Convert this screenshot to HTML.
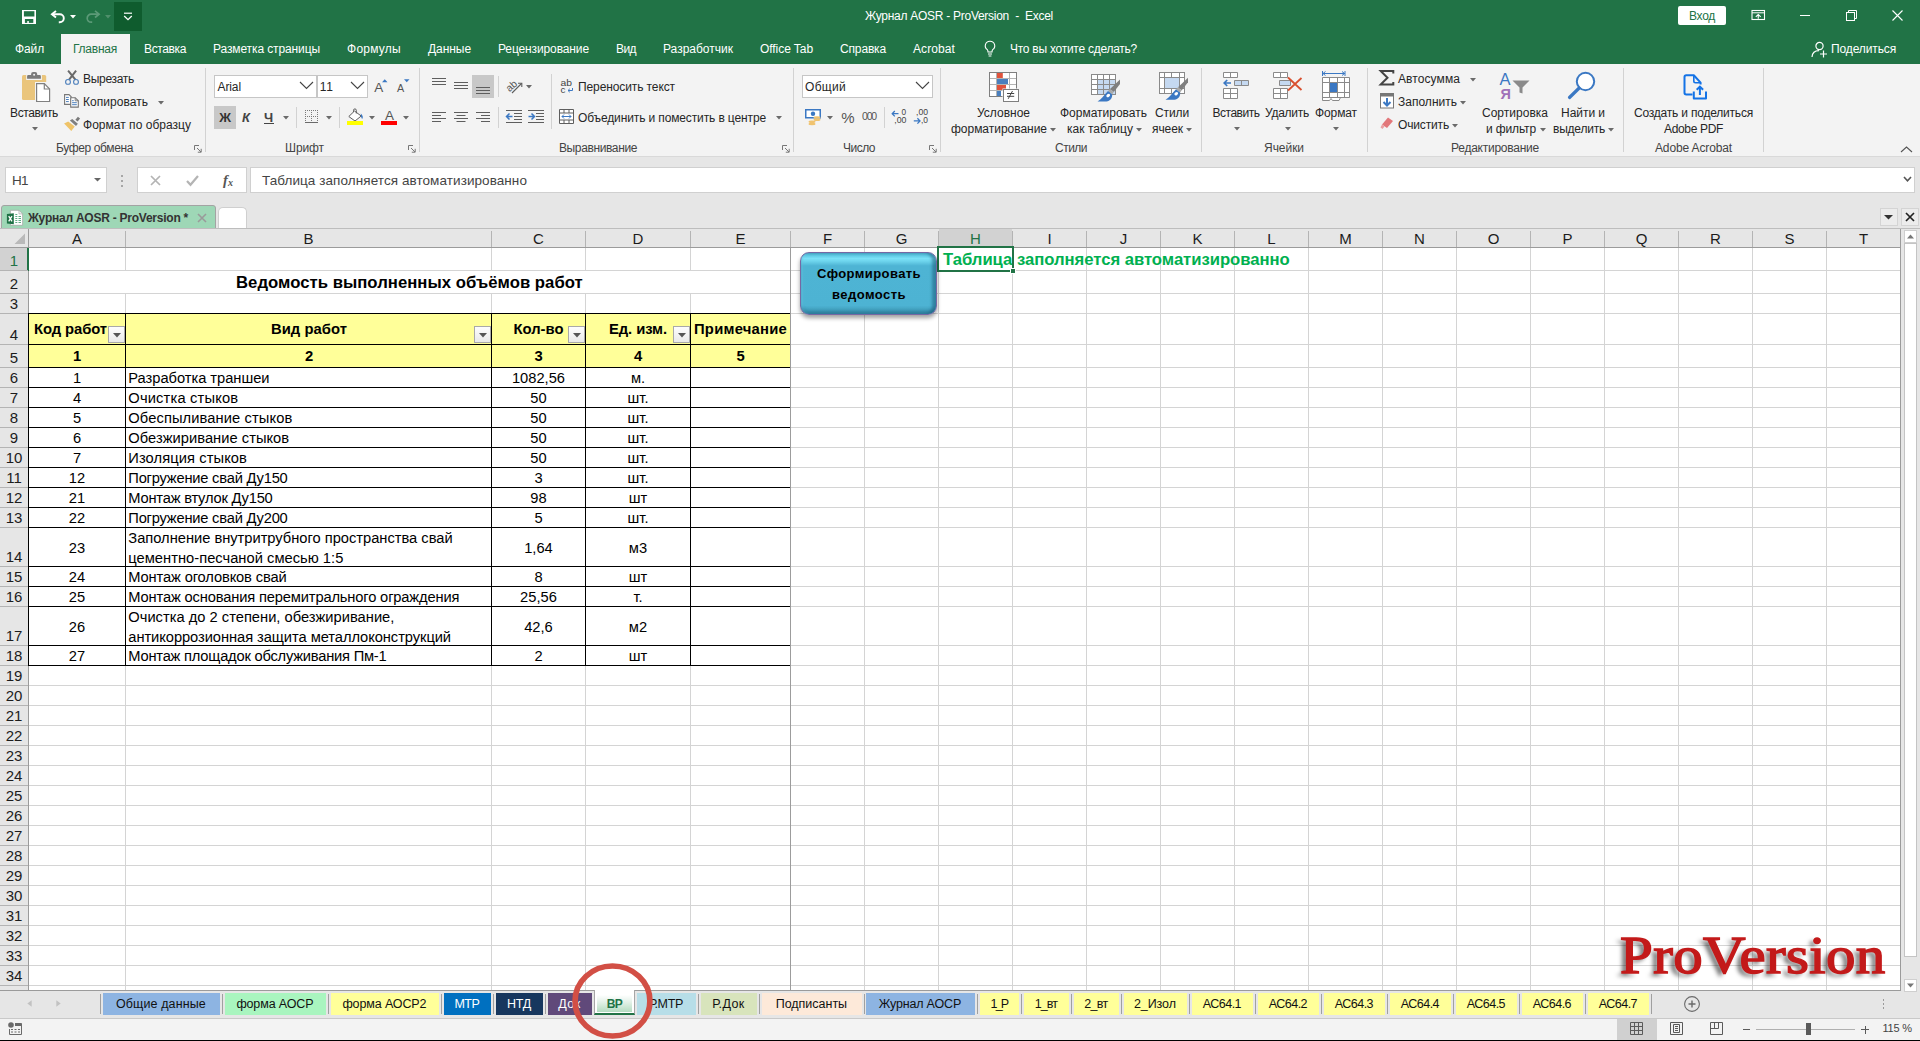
<!DOCTYPE html>
<html lang="ru"><head><meta charset="utf-8"><title>Журнал AOSR - ProVersion - Excel</title>
<style>
html,body{margin:0;padding:0;}
body{width:1920px;height:1041px;overflow:hidden;position:relative;background:#e6e6e6;font-family:"Liberation Sans",sans-serif;font-size:12px;color:#262626;}
div,svg,.t{position:absolute;}
.t{white-space:pre;display:block;}
svg{overflow:visible;}
</style></head><body>
<div style="left:0px;top:0px;width:1920px;height:64px;background:#217346;"></div>
<svg style="left:22px;top:10px;" width="14" height="14" viewBox="0 0 14 14"><rect x="0" y="0" width="14" height="14" fill="#fff"/><rect x="1.900" y="1.200" width="10.500" height="5.300" fill="#217346"/><rect x="2.900" y="9" width="8.400" height="3.900" fill="#217346"/><rect x="5.200" y="11.100" width="1.700" height="1.800" fill="#fff"/></svg>
<svg style="left:50px;top:10px;" width="16" height="14" viewBox="0 0 16 14"><path d="M2 4.200H9.800A4 4 0 0 1 9.800 12.200H8.800" fill="none" stroke="#fff" stroke-width="1.900"/><path d="M6 0.900L1.900 4.200L6 7.500" fill="none" stroke="#fff" stroke-width="1.900"/></svg>
<svg style="left:69.5px;top:15.0px;" width="6" height="4" viewBox="0 0 6 4"><path d="M0 0H6L3.0 3.5Z" fill="#fff"/></svg>
<svg style="left:86px;top:10px;" width="16" height="14" viewBox="0 0 16 14"><path d="M13 4.200H5.200A4 4 0 0 0 5.200 12.200H6.200" fill="none" stroke="#5c9a78" stroke-width="1.700"/><path d="M9 0.900L13.100 4.200L9 7.500" fill="none" stroke="#5c9a78" stroke-width="1.700"/></svg>
<svg style="left:104.5px;top:15.0px;" width="6" height="4" viewBox="0 0 6 4"><path d="M0 0H6L3.0 3.5Z" fill="#4f8f6b"/></svg>
<div style="left:114px;top:2px;width:28px;height:29px;background:#0f5c2e;"></div>
<svg style="left:123px;top:12px;" width="10" height="9" viewBox="0 0 10 9"><path d="M1 1.2H9" stroke="#fff" stroke-width="1.2"/><path d="M1.2 4L5 7.6L8.8 4" fill="none" stroke="#fff" stroke-width="1.3"/></svg>
<span class="t" style="left:865.00px;top:7.94px;height:17px;line-height:17px;font-size:12px;color:#fff;letter-spacing:-0.270px;white-space:pre;">Журнал AOSR - ProVersion  -  Excel</span>
<div style="left:1678px;top:6px;width:48px;height:19px;background:#fff;border-radius:2px;"></div>
<span class="t" style="left:1689.00px;top:8.34px;height:17px;line-height:17px;font-size:12px;color:#217346;letter-spacing:-0.287px;">Вход</span>
<svg style="left:1751px;top:9px;" width="15" height="12" viewBox="0 0 15 12"><rect x="1" y="1.500" width="12.500" height="9" fill="none" stroke="#fff" stroke-width="1.100"/><path d="M1 3.800H13.500" stroke="#fff" stroke-width="1"/><path d="M7.250 9.800V5.600M4.800 7.800L7.250 5.400L9.700 7.800" fill="none" stroke="#fff" stroke-width="1.100"/></svg>
<div style="left:1800px;top:15px;width:10px;height:1px;background:#fff;"></div>
<svg style="left:1846px;top:10px;" width="12" height="11" viewBox="0 0 12 11"><rect x="0.5" y="2.5" width="8" height="8" fill="none" stroke="#fff"/><path d="M2.5 2.5V0.5H10.5V8.5H8.5" fill="none" stroke="#fff"/></svg>
<svg style="left:1892px;top:10px;" width="11" height="11" viewBox="0 0 11 11"><path d="M0.5 0.5L10.500 10.500M10.500 0.5L0.5 10.500" stroke="#fff" stroke-width="1.100"/></svg>
<div style="left:61px;top:34px;width:69px;height:30px;background:#f3f3f3;"></div>
<span class="t" style="left:15.00px;top:41.34px;height:17px;line-height:17px;font-size:12px;color:#fff;letter-spacing:-0.125px;">Файл</span>
<span class="t" style="left:73.00px;top:41.34px;height:17px;line-height:17px;font-size:12px;color:#217346;letter-spacing:-0.239px;">Главная</span>
<span class="t" style="left:144.00px;top:41.34px;height:17px;line-height:17px;font-size:12px;color:#fff;letter-spacing:-0.372px;">Вставка</span>
<span class="t" style="left:213.00px;top:41.34px;height:17px;line-height:17px;font-size:12px;color:#fff;letter-spacing:-0.110px;">Разметка страницы</span>
<span class="t" style="left:347.00px;top:41.34px;height:17px;line-height:17px;font-size:12px;color:#fff;letter-spacing:0.254px;">Формулы</span>
<span class="t" style="left:428.00px;top:41.34px;height:17px;line-height:17px;font-size:12px;color:#fff;letter-spacing:-0.059px;">Данные</span>
<span class="t" style="left:498.00px;top:41.34px;height:17px;line-height:17px;font-size:12px;color:#fff;letter-spacing:-0.119px;">Рецензирование</span>
<span class="t" style="left:616.00px;top:41.34px;height:17px;line-height:17px;font-size:12px;color:#fff;letter-spacing:-0.570px;">Вид</span>
<span class="t" style="left:663.00px;top:41.34px;height:17px;line-height:17px;font-size:12px;color:#fff;">Разработчик</span>
<span class="t" style="left:760.00px;top:41.34px;height:17px;line-height:17px;font-size:12px;color:#fff;letter-spacing:-0.059px;">Office Tab</span>
<span class="t" style="left:840.00px;top:41.34px;height:17px;line-height:17px;font-size:12px;color:#fff;letter-spacing:-0.153px;">Справка</span>
<span class="t" style="left:913.00px;top:41.34px;height:17px;line-height:17px;font-size:12px;color:#fff;letter-spacing:0.092px;">Acrobat</span>
<span class="t" style="left:1010.00px;top:41.34px;height:17px;line-height:17px;font-size:12px;color:#fff;letter-spacing:-0.257px;">Что вы хотите сделать?</span>
<svg style="left:983px;top:40px;" width="14" height="18" viewBox="0 0 14 18"><path d="M7 1.2A4.6 4.6 0 0 0 4.3 9.6C4.9 10.3 5 11 5 12H9C9 11 9.1 10.3 9.7 9.6A4.6 4.6 0 0 0 7 1.2Z" fill="none" stroke="#fff" stroke-width="1.1"/><path d="M5 14H9M5.6 16H8.4" stroke="#fff" stroke-width="1.1"/></svg>
<svg style="left:1811px;top:41px;" width="17" height="17" viewBox="0 0 17 17"><circle cx="8.5" cy="5" r="3.6" fill="none" stroke="#fff" stroke-width="1.2"/><path d="M1 16C1.3 11.5 4.5 9.6 8 9.6" fill="none" stroke="#fff" stroke-width="1.2"/><path d="M12.5 9.5V16.5M9 13H16" stroke="#fff" stroke-width="1.2"/></svg>
<span class="t" style="left:1831.00px;top:41.34px;height:17px;line-height:17px;font-size:12px;color:#fff;letter-spacing:-0.126px;">Поделиться</span>
<div style="left:0px;top:64px;width:1920px;height:92px;background:#f3f3f3;"></div>
<div style="left:0px;top:156px;width:1920px;height:1px;background:#d9d9d9;"></div>
<div style="left:0px;top:157px;width:1920px;height:72px;background:#e6e6e6;"></div>
<div style="left:5px;top:167px;width:102px;height:26px;background:#fff;border:1px solid #d0d0d0;box-sizing:border-box;"></div>
<span class="t" style="left:12.00px;top:171.32px;height:19px;line-height:19px;font-size:13.5px;color:#444;letter-spacing:-0.629px;">H1</span>
<svg style="left:93.5px;top:178.0px;" width="7" height="4" viewBox="0 0 7 4"><path d="M0 0H7L3.5 3.5Z" fill="#666"/></svg>
<div style="left:121px;top:175px;width:2px;height:2px;background:#a6a6a6;"></div>
<div style="left:121px;top:180px;width:2px;height:2px;background:#a6a6a6;"></div>
<div style="left:121px;top:185px;width:2px;height:2px;background:#a6a6a6;"></div>
<div style="left:137px;top:167px;width:110px;height:26px;background:#fff;border:1px solid #d0d0d0;box-sizing:border-box;"></div>
<svg style="left:150px;top:175px;" width="11" height="11" viewBox="0 0 11 11"><path d="M1 1L10 10M10 1L1 10" stroke="#b4b4b4" stroke-width="1.700"/></svg>
<svg style="left:186px;top:175px;" width="13" height="11" viewBox="0 0 13 11"><path d="M1 6L4.500 9.800L12 1" fill="none" stroke="#b4b4b4" stroke-width="2.200"/></svg>
<span class="t" style="left:223.00px;top:170.48px;height:20px;line-height:20px;font-size:14.5px;color:#555;font-weight:bold;font-style:italic;font-family:'Liberation Serif',serif;">f</span>
<span class="t" style="left:228.00px;top:176.03px;height:14px;line-height:14px;font-size:10px;color:#555;font-weight:bold;font-style:italic;font-family:'Liberation Serif',serif;">x</span>
<div style="left:250px;top:167px;width:1665px;height:26px;background:#fff;border:1px solid #d0d0d0;box-sizing:border-box;"></div>
<span class="t" style="left:262.00px;top:171.32px;height:19px;line-height:19px;font-size:13.5px;color:#444;letter-spacing:0.073px;">Таблица заполняется автоматизированно</span>
<svg style="left:1903px;top:176px;" width="9" height="7" viewBox="0 0 9 7"><path d="M1 1L4.5 4.8L8 1" fill="none" stroke="#555" stroke-width="1.6"/></svg>
<div style="left:1px;top:205px;width:215px;height:24px;background:#9ed7b6;border:1px solid #a3a3a3;border-radius:3px 3px 0 0;box-sizing:border-box;"></div>
<svg style="left:6px;top:209px;" width="17" height="17" viewBox="0 0 17 17"><path d="M4.400 1.300H13L16.600 4.900V16.300H4.400Z" fill="#fff" stroke="#a8a8a8" stroke-width="0.8"/><path d="M13 1.300V4.900H16.600" fill="none" stroke="#a8a8a8" stroke-width="0.7"/><path d="M9.300 7.500H11.300M12.500 7.500H15M9.300 9.500H11.300M12.500 9.500H15M9.300 11.500H11.300M12.500 11.500H15M9.300 13.500H11.300M12.500 13.500H15M9.300 5.500H11.300" stroke="#4ea277" stroke-width="0.9"/><path d="M0.900 5L7.800 4.200V15.200L0.900 14.400Z" fill="#1e7145"/><path d="M2.700 7.200L6 12.300M6 7.200L2.700 12.300" stroke="#fff" stroke-width="1.300"/></svg>
<span class="t" style="left:28.00px;top:210.34px;height:17px;line-height:17px;font-size:12px;color:#333;font-weight:bold;letter-spacing:-0.241px;">Журнал AOSR - ProVersion *</span>
<svg style="left:197px;top:213px;" width="10" height="10" viewBox="0 0 10 10"><path d="M1 1L9 9M9 1L1 9" stroke="#9a9a9a" stroke-width="1.6"/></svg>
<div style="left:218px;top:207px;width:29px;height:22px;background:#fff;border:1px solid #cfcfcf;border-bottom:none;border-radius:5px 5px 0 0;box-sizing:border-box;"></div>
<div style="left:1880px;top:208px;width:18px;height:18px;background:#ececec;border:1px solid #d4d4d4;box-sizing:border-box;"></div>
<svg style="left:1884.0px;top:214.5px;" width="9" height="5" viewBox="0 0 9 5"><path d="M0 0H9L4.5 4.5Z" fill="#333"/></svg>
<div style="left:1901px;top:208px;width:18px;height:18px;background:#ececec;border:1px solid #d4d4d4;box-sizing:border-box;"></div>
<svg style="left:1905px;top:212px;" width="10" height="10" viewBox="0 0 10 10"><path d="M1 1L9 9M9 1L1 9" stroke="#222" stroke-width="1.7"/></svg>
<div style="left:0px;top:228px;width:1920px;height:1px;background:#bdbdbd;"></div>
<div style="left:0px;top:991px;width:1920px;height:27px;background:#e6e6e6;"></div>
<div style="left:0px;top:990px;width:1920px;height:1px;background:#9b9b9b;"></div>
<div style="left:0px;top:1018px;width:1920px;height:1px;background:#c9c9c9;"></div>
<svg style="left:26.5px;top:1000.3px;" width="5" height="7" viewBox="0 0 5 7"><path d="M4.700 0.200V6.800L0.300 3.500Z" fill="#c2c2c2"/></svg>
<svg style="left:55.6px;top:1000.3px;" width="5" height="7" viewBox="0 0 5 7"><path d="M0.300 0.200V6.800L4.700 3.500Z" fill="#c2c2c2"/></svg>
<div style="left:100px;top:994px;width:1px;height:20px;background:#a0a0a0;"></div>
<div style="left:103px;top:993px;width:117px;height:22px;background:#8db4e2;"></div>
<span class="t" style="left:115.90px;top:995.17px;height:18px;line-height:18px;font-size:12.5px;color:#111;letter-spacing:0.120px;">Общие данные</span>
<div style="left:222px;top:994px;width:1px;height:20px;background:#a0a0a0;"></div>
<div style="left:225px;top:993px;width:101px;height:22px;background:#a9f5bf;"></div>
<span class="t" style="left:236.40px;top:995.17px;height:18px;line-height:18px;font-size:12.5px;color:#111;letter-spacing:-0.136px;">форма АОСР</span>
<div style="left:328px;top:994px;width:1px;height:20px;background:#a0a0a0;"></div>
<div style="left:331px;top:993px;width:108px;height:22px;background:#ffff99;"></div>
<span class="t" style="left:342.40px;top:995.17px;height:18px;line-height:18px;font-size:12.5px;color:#111;letter-spacing:-0.119px;">форма АОСР2</span>
<div style="left:441px;top:994px;width:1px;height:20px;background:#a0a0a0;"></div>
<div style="left:444px;top:993px;width:47px;height:22px;background:#0070c0;"></div>
<span class="t" style="left:454.40px;top:995.17px;height:18px;line-height:18px;font-size:12.5px;color:#fff;letter-spacing:-0.462px;">МТР</span>
<div style="left:493px;top:994px;width:1px;height:20px;background:#a0a0a0;"></div>
<div style="left:496px;top:993px;width:47px;height:22px;background:#17375e;"></div>
<span class="t" style="left:506.90px;top:995.17px;height:18px;line-height:18px;font-size:12.5px;color:#fff;letter-spacing:-0.238px;">НТД</span>
<div style="left:545px;top:994px;width:1px;height:20px;background:#a0a0a0;"></div>
<div style="left:548px;top:993px;width:44px;height:22px;background:#60497a;"></div>
<span class="t" style="left:558.15px;top:995.17px;height:18px;line-height:18px;font-size:12.5px;color:#fff;letter-spacing:0.491px;">Док</span>
<div style="left:594px;top:990px;width:41px;height:25px;background:#fff;border-left:1px solid #a6a6a6;border-right:1px solid #a6a6a6;border-bottom:2px solid #217346;box-sizing:border-box;"></div>
<div style="left:597px;top:994px;width:35px;height:18px;background:linear-gradient(#fff 5%,#e3f1e8 45%,#b4dcc1);"></div>
<span class="t" style="left:606.75px;top:995.84px;height:17px;line-height:17px;font-size:12px;color:#217346;font-weight:bold;letter-spacing:-0.585px;">ВР</span>
<div style="left:637px;top:993px;width:59px;height:22px;background:#b7dee8;"></div>
<span class="t" style="left:648.90px;top:995.17px;height:18px;line-height:18px;font-size:12.5px;color:#111;letter-spacing:-0.367px;">Р.МТР</span>
<div style="left:698px;top:994px;width:1px;height:20px;background:#a0a0a0;"></div>
<div style="left:701px;top:993px;width:56px;height:22px;background:#d8e4bc;"></div>
<span class="t" style="left:712.15px;top:995.17px;height:18px;line-height:18px;font-size:12.5px;color:#111;letter-spacing:0.405px;">Р.Док</span>
<div style="left:759px;top:994px;width:1px;height:20px;background:#a0a0a0;"></div>
<div style="left:762px;top:993px;width:100px;height:22px;background:#fde9d9;"></div>
<span class="t" style="left:775.70px;top:995.17px;height:18px;line-height:18px;font-size:12.5px;color:#111;letter-spacing:-0.012px;">Подписанты</span>
<div style="left:864px;top:994px;width:1px;height:20px;background:#a0a0a0;"></div>
<div style="left:866px;top:993px;width:109px;height:22px;background:#8db4e2;"></div>
<span class="t" style="left:878.75px;top:995.17px;height:18px;line-height:18px;font-size:12.5px;color:#111;letter-spacing:-0.176px;">Журнал АОСР</span>
<div style="left:977px;top:994px;width:1px;height:20px;background:#a0a0a0;"></div>
<div style="left:980px;top:993px;width:39px;height:22px;background:#ffff99;"></div>
<span class="t" style="left:990.55px;top:995.17px;height:18px;line-height:18px;font-size:12.5px;color:#111;letter-spacing:-1.847px;">1_Р</span>
<div style="left:1021px;top:994px;width:1px;height:20px;background:#a0a0a0;"></div>
<div style="left:1024px;top:993px;width:45px;height:22px;background:#ffff99;"></div>
<span class="t" style="left:1034.65px;top:995.17px;height:18px;line-height:18px;font-size:12.5px;color:#111;letter-spacing:-0.874px;">1_вт</span>
<div style="left:1071px;top:994px;width:1px;height:20px;background:#a0a0a0;"></div>
<div style="left:1074px;top:993px;width:45px;height:22px;background:#ffff99;"></div>
<span class="t" style="left:1084.25px;top:995.17px;height:18px;line-height:18px;font-size:12.5px;color:#111;letter-spacing:-0.674px;">2_вт</span>
<div style="left:1121px;top:994px;width:1px;height:20px;background:#a0a0a0;"></div>
<div style="left:1124px;top:993px;width:63px;height:22px;background:#ffff99;"></div>
<span class="t" style="left:1133.90px;top:995.17px;height:18px;line-height:18px;font-size:12.5px;color:#111;letter-spacing:-0.075px;">2_Изол</span>
<div style="left:1189px;top:994px;width:1px;height:20px;background:#a0a0a0;"></div>
<div style="left:1192px;top:993px;width:61px;height:22px;background:#ffff99;"></div>
<span class="t" style="left:1202.75px;top:995.17px;height:18px;line-height:18px;font-size:12.5px;color:#111;letter-spacing:-0.520px;">АС64.1</span>
<div style="left:1255px;top:994px;width:1px;height:20px;background:#a0a0a0;"></div>
<div style="left:1258px;top:993px;width:61px;height:22px;background:#ffff99;"></div>
<span class="t" style="left:1268.75px;top:995.17px;height:18px;line-height:18px;font-size:12.5px;color:#111;letter-spacing:-0.520px;">АС64.2</span>
<div style="left:1321px;top:994px;width:1px;height:20px;background:#a0a0a0;"></div>
<div style="left:1324px;top:993px;width:61px;height:22px;background:#ffff99;"></div>
<span class="t" style="left:1334.75px;top:995.17px;height:18px;line-height:18px;font-size:12.5px;color:#111;letter-spacing:-0.520px;">АС64.3</span>
<div style="left:1387px;top:994px;width:1px;height:20px;background:#a0a0a0;"></div>
<div style="left:1390px;top:993px;width:61px;height:22px;background:#ffff99;"></div>
<span class="t" style="left:1400.75px;top:995.17px;height:18px;line-height:18px;font-size:12.5px;color:#111;letter-spacing:-0.520px;">АС64.4</span>
<div style="left:1453px;top:994px;width:1px;height:20px;background:#a0a0a0;"></div>
<div style="left:1456px;top:993px;width:61px;height:22px;background:#ffff99;"></div>
<span class="t" style="left:1466.75px;top:995.17px;height:18px;line-height:18px;font-size:12.5px;color:#111;letter-spacing:-0.520px;">АС64.5</span>
<div style="left:1519px;top:994px;width:1px;height:20px;background:#a0a0a0;"></div>
<div style="left:1522px;top:993px;width:61px;height:22px;background:#ffff99;"></div>
<span class="t" style="left:1532.75px;top:995.17px;height:18px;line-height:18px;font-size:12.5px;color:#111;letter-spacing:-0.520px;">АС64.6</span>
<div style="left:1585px;top:994px;width:1px;height:20px;background:#a0a0a0;"></div>
<div style="left:1588px;top:993px;width:61px;height:22px;background:#ffff99;"></div>
<span class="t" style="left:1598.75px;top:995.17px;height:18px;line-height:18px;font-size:12.5px;color:#111;letter-spacing:-0.520px;">АС64.7</span>
<div style="left:1651px;top:994px;width:1px;height:20px;background:#a0a0a0;"></div>
<svg style="left:1683.7px;top:995.7px;" width="16" height="16" viewBox="0 0 16 16"><circle cx="8" cy="8" r="7.4" fill="none" stroke="#6a6a6a" stroke-width="1.1"/><path d="M8 4.5V11.5M4.5 8H11.5" stroke="#6a6a6a" stroke-width="1.4"/></svg>
<div style="left:1883px;top:999px;width:1px;height:2px;background:#9a9a9a;"></div>
<div style="left:1883px;top:1003px;width:1px;height:2px;background:#9a9a9a;"></div>
<div style="left:1883px;top:1007px;width:1px;height:2px;background:#9a9a9a;"></div>
<div style="left:0px;top:1019px;width:1920px;height:21px;background:#f3f3f3;"></div>
<div style="left:0px;top:1040px;width:1920px;height:1px;background:#000;"></div>
<svg style="left:8px;top:1022px;" width="14" height="13" viewBox="0 0 14 13"><circle cx="3" cy="3" r="2.8" fill="#6a6a6a"/><path d="M7 1.500H13.5V12.5H1.500V7" fill="none" stroke="#6a6a6a" stroke-width="1"/><path d="M7 1.500H13.5V4H7Z" fill="#6a6a6a"/><path d="M3 7.5H5M6.500 7.5H8.5M10 7.5H12M3 10H5M6.500 10H8.5M10 10H12" stroke="#6a6a6a" stroke-width="1.2"/></svg>
<div style="left:1617px;top:1019px;width:40px;height:21px;background:#d0d0d0;"></div>
<svg style="left:1630px;top:1022px;" width="14" height="13" viewBox="0 0 14 13"><path d="M0.5 0.5H12.5V12.5H0.5ZM0.5 4.5H12.5M0.5 8.5H12.5M4.5 0.5V12.5M8.5 0.5V12.5" fill="none" stroke="#5a5a5a"/></svg>
<svg style="left:1670px;top:1022px;" width="14" height="13" viewBox="0 0 14 13"><path d="M0.5 0.5H12.5V12.5H0.5Z" fill="none" stroke="#5a5a5a"/><path d="M3.500 2.500H9.500V10.500H3.500ZM5 4.500H8M5 6.500H8M5 8.500H8" fill="none" stroke="#5a5a5a"/></svg>
<svg style="left:1710px;top:1022px;" width="14" height="13" viewBox="0 0 14 13"><path d="M0.5 0.5H12.5V12.5H0.5Z" fill="none" stroke="#5a5a5a"/><path d="M4.500 0.5V6.500M8.500 0.5V6.500M0.5 6.500H8.500" fill="none" stroke="#5a5a5a"/></svg>
<div style="left:1743px;top:1029px;width:7px;height:1px;background:#5a5a5a;"></div>
<div style="left:1756px;top:1029px;width:99px;height:1px;background:#b0b0b0;"></div>
<div style="left:1806px;top:1023px;width:5px;height:12px;background:#5a5a5a;"></div>
<div style="left:1861px;top:1029px;width:8px;height:1px;background:#5a5a5a;"></div>
<div style="left:1864.5px;top:1025.5px;width:1px;height:8px;background:#5a5a5a;"></div>
<span class="t" style="left:1882.50px;top:1021.29px;height:15px;line-height:15px;font-size:11px;color:#444;letter-spacing:-0.235px;">115 %</span>
<svg style="left:22px;top:72px;" width="29" height="31" viewBox="0 0 29 31"><rect x="0" y="3" width="24.200" height="25" rx="1.600" fill="#eac57c"/><rect x="4.200" y="2.500" width="15.700" height="5.500" fill="#f3f3f3"/><path d="M5.100 6.800V4.300Q5.100 3.100 6.300 3.100H9.100V2.100Q9.100 0.100 11.100 0.100H13.200Q15.200 0.100 15.200 2.100V3.100H17.700Q18.900 3.100 18.900 4.300V6.800Z" fill="#7a7a7a"/><circle cx="12.100" cy="2.800" r="1" fill="#f3f3f3"/><rect x="13" y="10" width="16.500" height="21" fill="#f3f3f3"/><path d="M14.600 11.600H22.300L27.600 17V29.500H14.600Z" fill="#fff" stroke="#808080" stroke-width="1.200"/><path d="M22.300 11.600V17H27.600" fill="none" stroke="#808080" stroke-width="1.200"/></svg>
<span class="t" style="left:10.00px;top:105.04px;height:17px;line-height:17px;font-size:12px;color:#262626;letter-spacing:-0.358px;">Вставить</span>
<svg style="left:31.5px;top:127.0px;" width="6" height="4" viewBox="0 0 6 4"><path d="M0 0H6L3.0 3.5Z" fill="#6a6a6a"/></svg>
<svg style="left:65px;top:69px;" width="15" height="16" viewBox="0 0 15 16"><path d="M3.100 1.700L10.400 10.600M11.100 1.700L4.100 10.600" stroke="#6a6a6a" stroke-width="2" fill="none"/><circle cx="3" cy="12.900" r="2.400" fill="none" stroke="#4a7ebb" stroke-width="1.100"/><circle cx="11" cy="12.900" r="2.400" fill="none" stroke="#4a7ebb" stroke-width="1.100"/></svg>
<span class="t" style="left:83.00px;top:70.84px;height:17px;line-height:17px;font-size:12px;color:#262626;letter-spacing:-0.297px;">Вырезать</span>
<svg style="left:64px;top:93px;" width="16" height="16" viewBox="0 0 16 16"><path d="M0.600 1.600H5L7.200 3.800V11.400H0.600Z" fill="#fff" stroke="#777" stroke-width="1.100"/><path d="M2 4.400H4.800M2 6.500H4.800M2 8.600H4.800" stroke="#4a7ebb" stroke-width="1"/><path d="M6.700 4.700H11.200L14.300 7.800V14.100H6.700Z" fill="#fff" stroke="#777" stroke-width="1.100"/><path d="M11.200 4.700V7.800H14.300" fill="none" stroke="#777" stroke-width="0.900"/><path d="M8.100 7.700H9.700M8.100 9.700H12.800M8.100 11.700H12.800" stroke="#4a7ebb" stroke-width="1"/></svg>
<span class="t" style="left:83.00px;top:93.84px;height:17px;line-height:17px;font-size:12px;color:#262626;letter-spacing:0.039px;">Копировать</span>
<svg style="left:157.5px;top:100.5px;" width="6" height="4" viewBox="0 0 6 4"><path d="M0 0H6L3.0 3.5Z" fill="#6a6a6a"/></svg>
<svg style="left:64px;top:116px;" width="17" height="17" viewBox="0 0 17 17"><path d="M13.900 0.700L16.100 2.400L13.600 5.600L11.400 3.700Z" fill="#7a7a7a"/><path d="M8.250 2.900L13.900 7.750L12 9.900L5.900 4.600Z" fill="#7f7f7f"/><path d="M4.200 5.600L10.750 10.600L7.300 14.900L0.100 7.400Z" fill="#efc368"/></svg>
<span class="t" style="left:83.00px;top:116.84px;height:17px;line-height:17px;font-size:12px;color:#262626;letter-spacing:0.023px;">Формат по образцу</span>
<span class="t" style="left:56.00px;top:140.04px;height:17px;line-height:17px;font-size:12px;color:#444;letter-spacing:-0.378px;">Буфер обмена</span>
<svg style="left:194px;top:145px;" width="8" height="8" viewBox="0 0 8 8"><path d="M0.5 5V0.5H5" fill="none" stroke="#777" stroke-width="1"/><path d="M3 3L7 7M7.2 3.800V7.2H3.800" fill="none" stroke="#777" stroke-width="1"/></svg>
<div style="left:205px;top:68px;width:1px;height:84px;background:#d2d2d2;"></div>
<div style="left:214px;top:75px;width:103px;height:23px;background:#fff;border:1px solid #c6c6c6;box-sizing:border-box;"></div>
<div style="left:317px;top:75px;width:51px;height:23px;background:#fff;border:1px solid #c6c6c6;box-sizing:border-box;"></div>
<span class="t" style="left:217.50px;top:79.04px;height:17px;line-height:17px;font-size:12px;color:#262626;letter-spacing:-0.101px;">Arial</span>
<span class="t" style="left:319.70px;top:79.04px;height:17px;line-height:17px;font-size:12px;color:#262626;letter-spacing:0.900px;">11</span>
<svg style="left:299px;top:81px;" width="15" height="9" viewBox="0 0 15 9"><path d="M1 1L7.500 7.500L14 1" fill="none" stroke="#444" stroke-width="1.100"/></svg>
<svg style="left:350px;top:81px;" width="15" height="9" viewBox="0 0 15 9"><path d="M1 1L7.500 7.500L14 1" fill="none" stroke="#444" stroke-width="1.100"/></svg>
<span class="t" style="left:374.20px;top:77.62px;height:19px;line-height:19px;font-size:13.5px;color:#555;">A</span>
<svg style="left:381.7px;top:78.7px;" width="6" height="4" viewBox="0 0 6 4"><path d="M0 3.300H5.500L2.750 0.200Z" fill="#3b78c3"/></svg>
<span class="t" style="left:397.00px;top:80.56px;height:15px;line-height:15px;font-size:10.8px;color:#555;">A</span>
<svg style="left:403.6px;top:78.8px;" width="6" height="4" viewBox="0 0 6 4"><path d="M0 0.200H5.500L2.750 3.300Z" fill="#3b78c3"/></svg>
<div style="left:214px;top:106px;width:22px;height:23px;background:#c8c8c8;"></div>
<span class="t" style="left:219.13px;top:108.50px;height:18px;line-height:18px;font-size:13px;color:#333;font-weight:bold;">Ж</span>
<span class="t" style="left:242.03px;top:108.50px;height:18px;line-height:18px;font-size:13px;color:#444;font-weight:bold;font-style:italic;">К</span>
<span class="t" style="left:263.93px;top:108.50px;height:18px;line-height:18px;font-size:13px;color:#444;font-weight:bold;">Ч</span>
<div style="left:264px;top:123px;width:10px;height:1px;background:#444;"></div>
<svg style="left:282.5px;top:116.0px;" width="6" height="4" viewBox="0 0 6 4"><path d="M0 0H6L3.0 3.5Z" fill="#6a6a6a"/></svg>
<div style="left:296px;top:107px;width:1px;height:21px;background:#d2d2d2;"></div>
<svg style="left:305px;top:110px;" width="13" height="13" viewBox="0 0 13 13"><rect x="0" y="0" width="1" height="1" fill="#7a7a7a"/><rect x="0" y="6" width="1" height="1" fill="#7a7a7a"/><rect x="0" y="0" width="1" height="1" fill="#7a7a7a"/><rect x="6" y="0" width="1" height="1" fill="#7a7a7a"/><rect x="12" y="0" width="1" height="1" fill="#7a7a7a"/><rect x="2" y="0" width="1" height="1" fill="#7a7a7a"/><rect x="2" y="6" width="1" height="1" fill="#7a7a7a"/><rect x="0" y="2" width="1" height="1" fill="#7a7a7a"/><rect x="6" y="2" width="1" height="1" fill="#7a7a7a"/><rect x="12" y="2" width="1" height="1" fill="#7a7a7a"/><rect x="4" y="0" width="1" height="1" fill="#7a7a7a"/><rect x="4" y="6" width="1" height="1" fill="#7a7a7a"/><rect x="0" y="4" width="1" height="1" fill="#7a7a7a"/><rect x="6" y="4" width="1" height="1" fill="#7a7a7a"/><rect x="12" y="4" width="1" height="1" fill="#7a7a7a"/><rect x="6" y="0" width="1" height="1" fill="#7a7a7a"/><rect x="6" y="6" width="1" height="1" fill="#7a7a7a"/><rect x="0" y="6" width="1" height="1" fill="#7a7a7a"/><rect x="6" y="6" width="1" height="1" fill="#7a7a7a"/><rect x="12" y="6" width="1" height="1" fill="#7a7a7a"/><rect x="8" y="0" width="1" height="1" fill="#7a7a7a"/><rect x="8" y="6" width="1" height="1" fill="#7a7a7a"/><rect x="0" y="8" width="1" height="1" fill="#7a7a7a"/><rect x="6" y="8" width="1" height="1" fill="#7a7a7a"/><rect x="12" y="8" width="1" height="1" fill="#7a7a7a"/><rect x="10" y="0" width="1" height="1" fill="#7a7a7a"/><rect x="10" y="6" width="1" height="1" fill="#7a7a7a"/><rect x="0" y="10" width="1" height="1" fill="#7a7a7a"/><rect x="6" y="10" width="1" height="1" fill="#7a7a7a"/><rect x="12" y="10" width="1" height="1" fill="#7a7a7a"/><rect x="12" y="0" width="1" height="1" fill="#7a7a7a"/><rect x="12" y="6" width="1" height="1" fill="#7a7a7a"/><rect x="0" y="12" width="1" height="1" fill="#7a7a7a"/><rect x="6" y="12" width="1" height="1" fill="#7a7a7a"/><rect x="12" y="12" width="1" height="1" fill="#7a7a7a"/><rect x="0" y="12" width="13" height="1" fill="#6a6a6a"/></svg>
<svg style="left:325.5px;top:116.0px;" width="6" height="4" viewBox="0 0 6 4"><path d="M0 0H6L3.0 3.5Z" fill="#6a6a6a"/></svg>
<div style="left:339px;top:107px;width:1px;height:21px;background:#d2d2d2;"></div>
<svg style="left:347px;top:108px;" width="17" height="18" viewBox="0 0 17 18"><path d="M1.800 8.500L7.500 3L14.200 8L8 13Z" fill="#fff" stroke="#5e5e5e" stroke-width="1"/><path d="M6.500 4V2.300A1.400 1.400 0 0 1 9.300 2.300V5.500" fill="none" stroke="#5e5e5e" stroke-width="1"/><path d="M13.800 5.500C16 7.500 16.300 9.500 15.200 11C14.200 10 13.600 8 13.800 5.500Z" fill="#3b78c3"/><rect x="0" y="13" width="16" height="4" fill="#ffff00"/></svg>
<svg style="left:368.5px;top:116.0px;" width="6" height="4" viewBox="0 0 6 4"><path d="M0 0H6L3.0 3.5Z" fill="#6a6a6a"/></svg>
<span class="t" style="left:384.90px;top:106.42px;height:19px;line-height:19px;font-size:13.5px;color:#555;">A</span>
<div style="left:381px;top:121px;width:16px;height:4px;background:#ff0000;"></div>
<svg style="left:402.5px;top:116.0px;" width="6" height="4" viewBox="0 0 6 4"><path d="M0 0H6L3.0 3.5Z" fill="#6a6a6a"/></svg>
<span class="t" style="left:285.00px;top:140.04px;height:17px;line-height:17px;font-size:12px;color:#444;letter-spacing:-0.096px;">Шрифт</span>
<svg style="left:408px;top:145px;" width="8" height="8" viewBox="0 0 8 8"><path d="M0.5 5V0.5H5" fill="none" stroke="#777" stroke-width="1"/><path d="M3 3L7 7M7.2 3.800V7.2H3.800" fill="none" stroke="#777" stroke-width="1"/></svg>
<div style="left:419px;top:68px;width:1px;height:84px;background:#d2d2d2;"></div>
<div style="left:472px;top:75px;width:22px;height:23px;background:#c8c8c8;"></div>
<svg style="left:432px;top:78px;" width="16" height="9" viewBox="0 0 16 9"><rect x="0" y="0" width="14" height="1" fill="#5e5e5e"/><rect x="0" y="3" width="14" height="1" fill="#5e5e5e"/><rect x="0" y="6" width="14" height="1" fill="#5e5e5e"/></svg>
<svg style="left:454px;top:82px;" width="16" height="9" viewBox="0 0 16 9"><rect x="0" y="0" width="14" height="1" fill="#5e5e5e"/><rect x="0" y="3" width="14" height="1" fill="#5e5e5e"/><rect x="0" y="6" width="14" height="1" fill="#5e5e5e"/></svg>
<svg style="left:476px;top:87px;" width="16" height="9" viewBox="0 0 16 9"><rect x="0" y="0" width="14" height="1" fill="#5e5e5e"/><rect x="0" y="3" width="14" height="1" fill="#5e5e5e"/><rect x="0" y="6" width="14" height="1" fill="#5e5e5e"/></svg>
<div style="left:498px;top:76px;width:1px;height:21px;background:#d2d2d2;"></div>
<svg style="left:504px;top:76px;" width="20" height="20" viewBox="0 0 20 20"><g transform="rotate(-42 8.500 12)"><text x="3.500" y="13.200" font-size="10.200" font-family="Liberation Sans,sans-serif" fill="#555">ab</text></g><path d="M8 17L17.500 7.500" stroke="#5e5e5e" stroke-width="1.100"/><path d="M14 7.200H17.800V11" fill="none" stroke="#5e5e5e" stroke-width="1.100"/></svg>
<svg style="left:525.5px;top:84.5px;" width="6" height="4" viewBox="0 0 6 4"><path d="M0 0H6L3.0 3.5Z" fill="#6a6a6a"/></svg>
<svg style="left:432px;top:112px;" width="16" height="12" viewBox="0 0 16 12"><rect x="0" y="0" width="14" height="1" fill="#5e5e5e"/><rect x="0" y="3" width="9" height="1" fill="#5e5e5e"/><rect x="0" y="6" width="14" height="1" fill="#5e5e5e"/><rect x="0" y="9" width="9" height="1" fill="#5e5e5e"/></svg>
<svg style="left:454px;top:112px;" width="16" height="12" viewBox="0 0 16 12"><rect x="0" y="0" width="14" height="1" fill="#5e5e5e"/><rect x="2.5" y="3" width="9" height="1" fill="#5e5e5e"/><rect x="0" y="6" width="14" height="1" fill="#5e5e5e"/><rect x="2.5" y="9" width="9" height="1" fill="#5e5e5e"/></svg>
<svg style="left:476px;top:112px;" width="16" height="12" viewBox="0 0 16 12"><rect x="0" y="0" width="14" height="1" fill="#5e5e5e"/><rect x="5" y="3" width="9" height="1" fill="#5e5e5e"/><rect x="0" y="6" width="14" height="1" fill="#5e5e5e"/><rect x="5" y="9" width="9" height="1" fill="#5e5e5e"/></svg>
<div style="left:498px;top:107px;width:1px;height:21px;background:#d2d2d2;"></div>
<svg style="left:506px;top:110px;" width="17" height="14" viewBox="0 0 17 14"><path d="M0.5 6.500H6.500M3.500 3.500L0.5 6.500L3.500 9.500" fill="none" stroke="#3b78c3" stroke-width="1.500"/><path d="M0 0.5H16M8 3.500H16M8 6.500H16M8 9.500H16M0 12.500H16" stroke="#5e5e5e" stroke-width="1"/></svg>
<svg style="left:528px;top:110px;" width="17" height="14" viewBox="0 0 17 14"><path d="M0.5 6.500H6.500M3.500 3.500L6.500 6.500L3.500 9.500" fill="none" stroke="#3b78c3" stroke-width="1.500"/><path d="M0 0.5H16M8 3.500H16M8 6.500H16M8 9.500H16M0 12.500H16" stroke="#5e5e5e" stroke-width="1"/></svg>
<div style="left:551px;top:74px;width:1px;height:55px;background:#d2d2d2;"></div>
<svg style="left:560px;top:77px;" width="14" height="17" viewBox="0 0 14 17"><text x="0.5" y="8.500" font-size="9.800" font-family="Liberation Sans,sans-serif" fill="#444" textLength="11.500" lengthAdjust="spacingAndGlyphs">ab</text><text x="0.5" y="15.700" font-size="9.800" font-family="Liberation Sans,sans-serif" fill="#444">c</text><path d="M12.500 11V13.500H8M9.800 11.800L8 13.500L9.800 15.200" fill="none" stroke="#3b78c3" stroke-width="1"/></svg>
<span class="t" style="left:578.00px;top:79.14px;height:17px;line-height:17px;font-size:12px;color:#262626;letter-spacing:-0.103px;">Переносить текст</span>
<svg style="left:559px;top:109px;" width="16" height="16" viewBox="0 0 16 16"><path d="M0.5 0.5H14.5V14.500H0.5Z" fill="#fff" stroke="#5e5e5e" stroke-width="1"/><path d="M0.5 4H14.5M0.5 11H14.5M5 0.5V4M10 0.5V4M5 11V14.500M10 11V14.500" stroke="#5e5e5e" stroke-width="1"/><path d="M3 7.500H12M5 5.500L3 7.500L5 9.500M10 5.500L12 7.500L10 9.500" fill="none" stroke="#3b78c3" stroke-width="1"/></svg>
<span class="t" style="left:578.00px;top:110.04px;height:17px;line-height:17px;font-size:12px;color:#262626;letter-spacing:-0.124px;">Объединить и поместить в центре</span>
<svg style="left:775.5px;top:116.0px;" width="6" height="4" viewBox="0 0 6 4"><path d="M0 0H6L3.0 3.5Z" fill="#6a6a6a"/></svg>
<span class="t" style="left:559.00px;top:140.04px;height:17px;line-height:17px;font-size:12px;color:#444;letter-spacing:-0.383px;">Выравнивание</span>
<svg style="left:782px;top:145px;" width="8" height="8" viewBox="0 0 8 8"><path d="M0.5 5V0.5H5" fill="none" stroke="#777" stroke-width="1"/><path d="M3 3L7 7M7.2 3.800V7.2H3.800" fill="none" stroke="#777" stroke-width="1"/></svg>
<div style="left:793px;top:68px;width:1px;height:84px;background:#d2d2d2;"></div>
<div style="left:802px;top:75px;width:131px;height:23px;background:#fff;border:1px solid #c6c6c6;box-sizing:border-box;"></div>
<span class="t" style="left:805.00px;top:79.04px;height:17px;line-height:17px;font-size:12px;color:#262626;letter-spacing:0.303px;">Общий</span>
<svg style="left:915px;top:81px;" width="15" height="9" viewBox="0 0 15 9"><path d="M1 1L7.500 7.500L14 1" fill="none" stroke="#444" stroke-width="1.100"/></svg>
<svg style="left:805px;top:109px;" width="17" height="17" viewBox="0 0 17 17"><rect x="0.75" y="0.75" width="14.500" height="8" fill="#fff" stroke="#3b78c3" stroke-width="1.500"/><circle cx="8" cy="4.750" r="2.200" fill="#3b78c3"/><ellipse cx="12" cy="8.5" rx="3.500" ry="1.200" fill="#f0c36f"/><ellipse cx="12" cy="10.800" rx="3.500" ry="1.200" fill="#f0c36f"/><ellipse cx="7" cy="12.800" rx="3.500" ry="1.200" fill="#f0c36f"/><ellipse cx="7" cy="15" rx="3.500" ry="1.200" fill="#f0c36f"/></svg>
<svg style="left:826.5px;top:116.0px;" width="6" height="4" viewBox="0 0 6 4"><path d="M0 0H6L3.0 3.5Z" fill="#6a6a6a"/></svg>
<span class="t" style="left:841.20px;top:106.50px;height:21px;line-height:21px;font-size:15px;color:#555;">%</span>
<span class="t" style="left:862.00px;top:108.66px;height:15px;line-height:15px;font-size:10.5px;color:#555;letter-spacing:-1.173px;">000</span>
<div style="left:884px;top:107px;width:1px;height:21px;background:#d2d2d2;"></div>
<svg style="left:891px;top:109px;" width="17" height="17" viewBox="0 0 17 17"><path d="M1.200 4.700H7.500M3.800 2L1.200 4.700L3.800 7.400" fill="none" stroke="#3b78c3" stroke-width="1.300"/><text x="10.600" y="6.300" font-size="9" font-family="Liberation Sans,sans-serif" fill="#444" textLength="4.600" lengthAdjust="spacingAndGlyphs">0</text><text x="3.200" y="13.800" font-size="9" font-family="Liberation Sans,sans-serif" fill="#444" textLength="12.200" lengthAdjust="spacingAndGlyphs">,00</text></svg>
<svg style="left:913px;top:109px;" width="17" height="17" viewBox="0 0 17 17"><text x="3" y="6.300" font-size="9" font-family="Liberation Sans,sans-serif" fill="#444" textLength="12" lengthAdjust="spacingAndGlyphs">,00</text><path d="M0.8 11.900H7M4.400 9.200L7 11.900L4.400 14.600" fill="none" stroke="#3b78c3" stroke-width="1.300"/><text x="8" y="13.800" font-size="9" font-family="Liberation Sans,sans-serif" fill="#444" textLength="7" lengthAdjust="spacingAndGlyphs">,0</text></svg>
<span class="t" style="left:843.00px;top:140.04px;height:17px;line-height:17px;font-size:12px;color:#444;letter-spacing:-0.502px;">Число</span>
<svg style="left:929px;top:145px;" width="8" height="8" viewBox="0 0 8 8"><path d="M0.5 5V0.5H5" fill="none" stroke="#777" stroke-width="1"/><path d="M3 3L7 7M7.2 3.800V7.2H3.800" fill="none" stroke="#777" stroke-width="1"/></svg>
<div style="left:940px;top:68px;width:1px;height:84px;background:#d2d2d2;"></div>
<svg style="left:989px;top:72px;" width="31" height="31" viewBox="0 0 31 31"><rect x="0.5" y="0.5" width="27" height="24" fill="#fff" stroke="#7f7f7f"/><path d="M1 6.500H27M1 12.500H27M1 18.500H27M7.500 1V24M20.500 1V24" stroke="#b4b4b4" stroke-width="1"/><rect x="8" y="1" width="5.800" height="5" fill="#e0533c"/><rect x="8" y="7" width="11" height="5" fill="#4a7fbe"/><rect x="8" y="13" width="9" height="5" fill="#e0533c"/><rect x="8" y="19" width="4" height="5" fill="#4a7fbe"/><rect x="13.500" y="16.500" width="17" height="14" fill="#f3f3f3"/><rect x="14.500" y="17.500" width="15" height="12" fill="#fff" stroke="#7f7f7f"/><path d="M18 21.500H25.200M18 24.300H25.200M23.500 19L19.200 26.800" stroke="#444" stroke-width="1"/></svg>
<span class="t" style="left:977.00px;top:105.04px;height:17px;line-height:17px;font-size:12px;color:#262626;">Условное</span>
<span class="t" style="left:951.00px;top:120.84px;height:17px;line-height:17px;font-size:12px;color:#262626;letter-spacing:-0.025px;">форматирование</span>
<svg style="left:1050.0px;top:127.5px;" width="6" height="4" viewBox="0 0 6 4"><path d="M0 0H6L3.0 3.5Z" fill="#6a6a6a"/></svg>
<svg style="left:1091px;top:74px;" width="31" height="30" viewBox="0 0 31 30"><rect x="0.5" y="0.5" width="24" height="20" fill="#fff" stroke="#8a8a8a"/><rect x="7" y="6" width="17" height="14" fill="#c5d9f1"/><path d="M0.5 5.500H24.500M0.5 10.500H24.500M0.5 15.500H24.500M6.500 0.5V20.500M12.500 0.5V20.500M18.500 0.5V20.500" stroke="#8a8a8a" stroke-width="1"/><path d="M29 5.600V10L22.750 18.100L19 15Z" fill="#7f7f7f"/><path d="M19 15L22.750 18.100L21 20.600L17 17Z" fill="#a9a9a9"/><path d="M17 17L21.200 20.600C21.500 24 19 27.500 15.500 27.500H6.500C10.500 25.500 13 21 17 17Z" fill="#3b78c3"/><ellipse cx="17.200" cy="21.500" rx="2" ry="1.500" fill="#fff" transform="rotate(-35 17.200 21.500)"/></svg>
<span class="t" style="left:1060.00px;top:105.04px;height:17px;line-height:17px;font-size:12px;color:#262626;letter-spacing:-0.006px;">Форматировать</span>
<span class="t" style="left:1067.00px;top:120.84px;height:17px;line-height:17px;font-size:12px;color:#262626;letter-spacing:0.026px;">как таблицу</span>
<svg style="left:1136.0px;top:127.5px;" width="6" height="4" viewBox="0 0 6 4"><path d="M0 0H6L3.0 3.5Z" fill="#6a6a6a"/></svg>
<svg style="left:1159px;top:72px;" width="31" height="30" viewBox="0 0 31 30"><rect x="0.5" y="0.5" width="25" height="21" fill="#fff" stroke="#8a8a8a"/><path d="M0.5 5.500H25.500M0.5 16.500H25.500M5.500 0.5V21.500M20.500 0.5V21.500M12.500 0.5V5.500M12.500 16.500V21.500" stroke="#8a8a8a" stroke-width="1"/><rect x="6" y="6" width="14" height="10" fill="#c5d9f1"/><g transform="translate(0 0.2)"><path d="M29 5.600V10L22.750 18.100L19 15Z" fill="#7f7f7f"/><path d="M19 15L22.750 18.100L21 20.600L17 17Z" fill="#a9a9a9"/><path d="M17 17L21.200 20.600C21.500 24 19 27.500 15.500 27.500H6.500C10.500 25.500 13 21 17 17Z" fill="#3b78c3"/><ellipse cx="17.200" cy="21.500" rx="2" ry="1.500" fill="#fff" transform="rotate(-35 17.200 21.500)"/></g></svg>
<span class="t" style="left:1155.00px;top:105.04px;height:17px;line-height:17px;font-size:12px;color:#262626;letter-spacing:-0.114px;">Стили</span>
<span class="t" style="left:1152.00px;top:120.84px;height:17px;line-height:17px;font-size:12px;color:#262626;letter-spacing:-0.070px;">ячеек</span>
<svg style="left:1186.0px;top:127.5px;" width="6" height="4" viewBox="0 0 6 4"><path d="M0 0H6L3.0 3.5Z" fill="#6a6a6a"/></svg>
<span class="t" style="left:1055.00px;top:140.04px;height:17px;line-height:17px;font-size:12px;color:#444;letter-spacing:-0.514px;">Стили</span>
<div style="left:1201px;top:68px;width:1px;height:84px;background:#d2d2d2;"></div>
<svg style="left:1223px;top:72px;" width="28" height="28" viewBox="0 0 28 28"><path d="M0.5 0.5H14.500V5.500H0.5ZM7.500 0.5V5.500" fill="#fff" stroke="#8a8a8a"/><path d="M11.500 8.5H25.500V13.500H11.500ZM18.500 8.5V13.500" fill="#c5d9f1" stroke="#8a8a8a"/><path d="M0.5 16.500H14.500V26.500H0.5ZM7.500 16.500V26.500M0.5 21.500H14.500" fill="#fff" stroke="#8a8a8a"/><path d="M1.200 11H8M4.200 8L1.200 11L4.200 14" fill="none" stroke="#3b78c3" stroke-width="1.700"/></svg>
<span class="t" style="left:1212.50px;top:105.04px;height:17px;line-height:17px;font-size:12px;color:#262626;letter-spacing:-0.483px;">Вставить</span>
<svg style="left:1233.5px;top:127.0px;" width="6" height="4" viewBox="0 0 6 4"><path d="M0 0H6L3.0 3.5Z" fill="#6a6a6a"/></svg>
<svg style="left:1273px;top:72px;" width="30" height="28" viewBox="0 0 30 28"><path d="M0.5 0.5H14.500V5.500H0.5ZM7.500 0.5V5.500" fill="#fff" stroke="#8a8a8a"/><path d="M6.500 8.5H17.500V13.500H6.500Z" fill="#c5d9f1" stroke="#8a8a8a"/><path d="M0.5 16.500H14.500V26.500H0.5ZM7.500 16.500V26.500M0.5 21.500H14.500" fill="#fff" stroke="#8a8a8a"/><path d="M15 5.500L28.500 18M28.500 6L15 18.500" fill="none" stroke="#d9502f" stroke-width="1.800"/></svg>
<span class="t" style="left:1265.00px;top:105.04px;height:17px;line-height:17px;font-size:12px;color:#262626;letter-spacing:-0.259px;">Удалить</span>
<svg style="left:1284.5px;top:127.0px;" width="6" height="4" viewBox="0 0 6 4"><path d="M0 0H6L3.0 3.5Z" fill="#6a6a6a"/></svg>
<svg style="left:1321px;top:71px;" width="30" height="31" viewBox="0 0 30 31"><path d="M1.500 2.500H24M1.500 0V5M24 0V5M4.500 0.5L2 2.500L4.500 4.500M21 0.5L23.500 2.500L21 4.500" fill="none" stroke="#3b78c3" stroke-width="1"/><path d="M1.500 6.500H28.500V26.500H19.500L18 29.500H11.500L10 27.500L8.5 29.500H1.500Z" fill="#fff" stroke="#8a8a8a"/><path d="M1.500 11.500H28.500M1.500 21.500H28.500M8.5 6.500V26.500M16.500 6.500V26.500M23.500 6.500V26.500M1.500 26.500H28.500" fill="none" stroke="#8a8a8a"/><rect x="9" y="12" width="7" height="9" fill="#3b78c3"/></svg>
<span class="t" style="left:1315.00px;top:105.04px;height:17px;line-height:17px;font-size:12px;color:#262626;letter-spacing:-0.105px;">Формат</span>
<svg style="left:1332.5px;top:127.0px;" width="6" height="4" viewBox="0 0 6 4"><path d="M0 0H6L3.0 3.5Z" fill="#6a6a6a"/></svg>
<span class="t" style="left:1264.00px;top:140.04px;height:17px;line-height:17px;font-size:12px;color:#444;letter-spacing:-0.041px;">Ячейки</span>
<div style="left:1367px;top:68px;width:1px;height:84px;background:#d2d2d2;"></div>
<svg style="left:1379px;top:70px;" width="16" height="16" viewBox="0 0 16 16"><path d="M14.300 3.500V1H1.700L8.500 7.800L1.700 14.500H14.300V12" fill="none" stroke="#444" stroke-width="2"/></svg>
<span class="t" style="left:1398.00px;top:70.84px;height:17px;line-height:17px;font-size:12px;color:#262626;letter-spacing:0.090px;">Автосумма</span>
<svg style="left:1469.5px;top:77.5px;" width="6" height="4" viewBox="0 0 6 4"><path d="M0 0H6L3.0 3.5Z" fill="#6a6a6a"/></svg>
<svg style="left:1380px;top:93px;" width="15" height="16" viewBox="0 0 15 16"><rect x="0.5" y="0.5" width="13" height="14.500" fill="#fff" stroke="#777"/><rect x="0.5" y="0.5" width="13" height="3" fill="#777"/><path d="M7 5V12.500M3.500 9L7 12.500L10.500 9" fill="none" stroke="#3b78c3" stroke-width="2"/></svg>
<span class="t" style="left:1398.00px;top:93.84px;height:17px;line-height:17px;font-size:12px;color:#262626;letter-spacing:0.010px;">Заполнить</span>
<svg style="left:1460.0px;top:100.5px;" width="6" height="4" viewBox="0 0 6 4"><path d="M0 0H6L3.0 3.5Z" fill="#6a6a6a"/></svg>
<svg style="left:1380px;top:117px;" width="14" height="13" viewBox="0 0 14 13"><path d="M8 0.5L13 4L7 11L2 7.500Z" fill="#e2777a"/><path d="M2 7.500L4.500 9.500L2.500 12L0.5 10.500Z" fill="#e9a0a2"/></svg>
<span class="t" style="left:1398.00px;top:116.84px;height:17px;line-height:17px;font-size:12px;color:#262626;letter-spacing:-0.155px;">Очистить</span>
<svg style="left:1452.0px;top:123.5px;" width="6" height="4" viewBox="0 0 6 4"><path d="M0 0H6L3.0 3.5Z" fill="#6a6a6a"/></svg>
<svg style="left:1499px;top:71px;" width="32" height="30" viewBox="0 0 32 30"><text x="0.5" y="14" font-size="16.500" font-family="Liberation Sans,sans-serif" fill="#3b78c3">А</text><text x="1.500" y="28" font-size="14.500" font-weight="bold" font-family="Liberation Sans,sans-serif" fill="#a070b8">Я</text><path d="M13.500 9.500H30.500L23.500 16.500V22.500L20.500 21.500V16.500Z" fill="#8a8a8a"/></svg>
<span class="t" style="left:1482.00px;top:105.04px;height:17px;line-height:17px;font-size:12px;color:#262626;letter-spacing:0.014px;">Сортировка</span>
<span class="t" style="left:1486.00px;top:120.84px;height:17px;line-height:17px;font-size:12px;color:#262626;letter-spacing:-0.137px;">и фильтр</span>
<svg style="left:1540.0px;top:127.5px;" width="6" height="4" viewBox="0 0 6 4"><path d="M0 0H6L3.0 3.5Z" fill="#6a6a6a"/></svg>
<svg style="left:1567px;top:71px;" width="30" height="30" viewBox="0 0 30 30"><circle cx="18.500" cy="10.500" r="8.700" fill="#fff" stroke="#3b78c3" stroke-width="2"/><path d="M12.200 17L2.500 26.500" stroke="#3b78c3" stroke-width="3.200" stroke-linecap="round"/></svg>
<span class="t" style="left:1561.00px;top:105.04px;height:17px;line-height:17px;font-size:12px;color:#262626;letter-spacing:-0.040px;">Найти и</span>
<span class="t" style="left:1553.00px;top:120.84px;height:17px;line-height:17px;font-size:12px;color:#262626;letter-spacing:-0.216px;">выделить</span>
<svg style="left:1608.0px;top:127.5px;" width="6" height="4" viewBox="0 0 6 4"><path d="M0 0H6L3.0 3.5Z" fill="#6a6a6a"/></svg>
<span class="t" style="left:1451.00px;top:140.04px;height:17px;line-height:17px;font-size:12px;color:#444;letter-spacing:-0.244px;">Редактирование</span>
<div style="left:1623px;top:68px;width:1px;height:84px;background:#d2d2d2;"></div>
<svg style="left:1683px;top:74px;" width="25" height="27" viewBox="0 0 25 27"><path d="M9.500 20.500H3.200Q1.500 20.500 1.500 18.800V3Q1.500 1.250 3.200 1.250H10.800L17.600 8.700V10.500" fill="none" stroke="#1473e6" stroke-width="2" stroke-linejoin="round"/><path d="M10.800 1.250V7Q10.800 8.700 12.500 8.700H17.600" fill="none" stroke="#1473e6" stroke-width="1.600"/><path d="M10.800 17.500V24.500H23V17.500" fill="none" stroke="#1473e6" stroke-width="2" stroke-linejoin="round"/><path d="M16.900 21V13M13.700 15.800L16.900 12.600L20.100 15.800" fill="none" stroke="#1473e6" stroke-width="2"/></svg>
<span class="t" style="left:1634.00px;top:105.04px;height:17px;line-height:17px;font-size:12px;color:#262626;letter-spacing:-0.206px;">Создать и поделиться</span>
<span class="t" style="left:1664.00px;top:120.84px;height:17px;line-height:17px;font-size:12px;color:#262626;letter-spacing:-0.337px;">Adobe PDF</span>
<span class="t" style="left:1655.00px;top:140.04px;height:17px;line-height:17px;font-size:12px;color:#444;letter-spacing:-0.133px;">Adobe Acrobat</span>
<div style="left:1763px;top:68px;width:1px;height:84px;background:#d2d2d2;"></div>
<svg style="left:1900px;top:146px;" width="13" height="7" viewBox="0 0 13 7"><path d="M1 6L6.500 1L12 6" fill="none" stroke="#555" stroke-width="1.100"/></svg>
<div style="left:29px;top:248px;width:1872px;height:742px;background:#fff;"></div>
<div style="left:0px;top:229px;width:1901px;height:18px;background:#e6e6e6;"></div>
<div style="left:0px;top:247px;width:1901px;height:1px;background:#9b9b9b;"></div>
<div style="left:0px;top:248px;width:28px;height:742px;background:#e6e6e6;"></div>
<div style="left:28px;top:229px;width:1px;height:761px;background:#9b9b9b;"></div>
<svg style="left:14px;top:233px;" width="12" height="12" viewBox="0 0 12 12"><path d="M11 0.5V11H0.5Z" fill="#b9b9b9"/></svg>
<div style="left:939px;top:229px;width:73px;height:18px;background:#d2d2d2;"></div>
<div style="left:939px;top:246px;width:74px;height:2px;background:#217346;"></div>
<div style="left:0px;top:248px;width:28px;height:22px;background:#d2d2d2;"></div>
<div style="left:27px;top:248px;width:2px;height:23px;background:#217346;"></div>
<div style="left:125px;top:231px;width:1px;height:16px;background:#b4b4b4;"></div>
<span class="t" style="left:72.00px;top:227.80px;height:21px;line-height:21px;font-size:15px;color:#1c1c1c;">A</span>
<div style="left:491px;top:231px;width:1px;height:16px;background:#b4b4b4;"></div>
<span class="t" style="left:303.50px;top:227.80px;height:21px;line-height:21px;font-size:15px;color:#1c1c1c;">B</span>
<div style="left:585px;top:231px;width:1px;height:16px;background:#b4b4b4;"></div>
<span class="t" style="left:533.08px;top:227.80px;height:21px;line-height:21px;font-size:15px;color:#1c1c1c;">C</span>
<div style="left:690px;top:231px;width:1px;height:16px;background:#b4b4b4;"></div>
<span class="t" style="left:632.58px;top:227.80px;height:21px;line-height:21px;font-size:15px;color:#1c1c1c;">D</span>
<div style="left:790px;top:231px;width:1px;height:16px;background:#b4b4b4;"></div>
<span class="t" style="left:735.50px;top:227.80px;height:21px;line-height:21px;font-size:15px;color:#1c1c1c;">E</span>
<div style="left:864px;top:231px;width:1px;height:16px;background:#b4b4b4;"></div>
<span class="t" style="left:822.92px;top:227.80px;height:21px;line-height:21px;font-size:15px;color:#1c1c1c;">F</span>
<div style="left:938px;top:231px;width:1px;height:16px;background:#b4b4b4;"></div>
<span class="t" style="left:895.67px;top:227.80px;height:21px;line-height:21px;font-size:15px;color:#1c1c1c;">G</span>
<div style="left:1012px;top:231px;width:1px;height:16px;background:#b4b4b4;"></div>
<span class="t" style="left:970.08px;top:227.80px;height:21px;line-height:21px;font-size:15px;color:#217346;">H</span>
<div style="left:1086px;top:231px;width:1px;height:16px;background:#b4b4b4;"></div>
<span class="t" style="left:1047.42px;top:227.80px;height:21px;line-height:21px;font-size:15px;color:#1c1c1c;">I</span>
<div style="left:1160px;top:231px;width:1px;height:16px;background:#b4b4b4;"></div>
<span class="t" style="left:1119.75px;top:227.80px;height:21px;line-height:21px;font-size:15px;color:#1c1c1c;">J</span>
<div style="left:1234px;top:231px;width:1px;height:16px;background:#b4b4b4;"></div>
<span class="t" style="left:1192.50px;top:227.80px;height:21px;line-height:21px;font-size:15px;color:#1c1c1c;">K</span>
<div style="left:1308px;top:231px;width:1px;height:16px;background:#b4b4b4;"></div>
<span class="t" style="left:1267.33px;top:227.80px;height:21px;line-height:21px;font-size:15px;color:#1c1c1c;">L</span>
<div style="left:1382px;top:231px;width:1px;height:16px;background:#b4b4b4;"></div>
<span class="t" style="left:1339.25px;top:227.80px;height:21px;line-height:21px;font-size:15px;color:#1c1c1c;">M</span>
<div style="left:1456px;top:231px;width:1px;height:16px;background:#b4b4b4;"></div>
<span class="t" style="left:1414.08px;top:227.80px;height:21px;line-height:21px;font-size:15px;color:#1c1c1c;">N</span>
<div style="left:1530px;top:231px;width:1px;height:16px;background:#b4b4b4;"></div>
<span class="t" style="left:1487.67px;top:227.80px;height:21px;line-height:21px;font-size:15px;color:#1c1c1c;">O</span>
<div style="left:1604px;top:231px;width:1px;height:16px;background:#b4b4b4;"></div>
<span class="t" style="left:1562.50px;top:227.80px;height:21px;line-height:21px;font-size:15px;color:#1c1c1c;">P</span>
<div style="left:1678px;top:231px;width:1px;height:16px;background:#b4b4b4;"></div>
<span class="t" style="left:1635.67px;top:227.80px;height:21px;line-height:21px;font-size:15px;color:#1c1c1c;">Q</span>
<div style="left:1752px;top:231px;width:1px;height:16px;background:#b4b4b4;"></div>
<span class="t" style="left:1710.08px;top:227.80px;height:21px;line-height:21px;font-size:15px;color:#1c1c1c;">R</span>
<div style="left:1826px;top:231px;width:1px;height:16px;background:#b4b4b4;"></div>
<span class="t" style="left:1784.50px;top:227.80px;height:21px;line-height:21px;font-size:15px;color:#1c1c1c;">S</span>
<div style="left:1900px;top:231px;width:1px;height:16px;background:#b4b4b4;"></div>
<span class="t" style="left:1858.92px;top:227.80px;height:21px;line-height:21px;font-size:15px;color:#1c1c1c;">T</span>
<div style="left:0px;top:270px;width:28px;height:1px;background:#b4b4b4;"></div>
<span class="t" style="left:9.83px;top:249.70px;height:21px;line-height:21px;font-size:15px;color:#217346;">1</span>
<div style="left:0px;top:293px;width:28px;height:1px;background:#b4b4b4;"></div>
<span class="t" style="left:9.83px;top:272.70px;height:21px;line-height:21px;font-size:15px;color:#1c1c1c;">2</span>
<div style="left:0px;top:313px;width:28px;height:1px;background:#b4b4b4;"></div>
<span class="t" style="left:9.83px;top:292.70px;height:21px;line-height:21px;font-size:15px;color:#1c1c1c;">3</span>
<div style="left:0px;top:344px;width:28px;height:1px;background:#b4b4b4;"></div>
<span class="t" style="left:9.83px;top:323.70px;height:21px;line-height:21px;font-size:15px;color:#1c1c1c;">4</span>
<div style="left:0px;top:367px;width:28px;height:1px;background:#b4b4b4;"></div>
<span class="t" style="left:9.83px;top:346.70px;height:21px;line-height:21px;font-size:15px;color:#1c1c1c;">5</span>
<div style="left:0px;top:387px;width:28px;height:1px;background:#b4b4b4;"></div>
<span class="t" style="left:9.83px;top:366.70px;height:21px;line-height:21px;font-size:15px;color:#1c1c1c;">6</span>
<div style="left:0px;top:407px;width:28px;height:1px;background:#b4b4b4;"></div>
<span class="t" style="left:9.83px;top:386.70px;height:21px;line-height:21px;font-size:15px;color:#1c1c1c;">7</span>
<div style="left:0px;top:427px;width:28px;height:1px;background:#b4b4b4;"></div>
<span class="t" style="left:9.83px;top:406.70px;height:21px;line-height:21px;font-size:15px;color:#1c1c1c;">8</span>
<div style="left:0px;top:447px;width:28px;height:1px;background:#b4b4b4;"></div>
<span class="t" style="left:9.83px;top:426.70px;height:21px;line-height:21px;font-size:15px;color:#1c1c1c;">9</span>
<div style="left:0px;top:467px;width:28px;height:1px;background:#b4b4b4;"></div>
<span class="t" style="left:5.66px;top:446.70px;height:21px;line-height:21px;font-size:15px;color:#1c1c1c;">10</span>
<div style="left:0px;top:487px;width:28px;height:1px;background:#b4b4b4;"></div>
<span class="t" style="left:6.21px;top:466.70px;height:21px;line-height:21px;font-size:15px;color:#1c1c1c;">11</span>
<div style="left:0px;top:507px;width:28px;height:1px;background:#b4b4b4;"></div>
<span class="t" style="left:5.66px;top:486.70px;height:21px;line-height:21px;font-size:15px;color:#1c1c1c;">12</span>
<div style="left:0px;top:527px;width:28px;height:1px;background:#b4b4b4;"></div>
<span class="t" style="left:5.66px;top:506.70px;height:21px;line-height:21px;font-size:15px;color:#1c1c1c;">13</span>
<div style="left:0px;top:566px;width:28px;height:1px;background:#b4b4b4;"></div>
<span class="t" style="left:5.66px;top:545.70px;height:21px;line-height:21px;font-size:15px;color:#1c1c1c;">14</span>
<div style="left:0px;top:586px;width:28px;height:1px;background:#b4b4b4;"></div>
<span class="t" style="left:5.66px;top:565.70px;height:21px;line-height:21px;font-size:15px;color:#1c1c1c;">15</span>
<div style="left:0px;top:606px;width:28px;height:1px;background:#b4b4b4;"></div>
<span class="t" style="left:5.66px;top:585.70px;height:21px;line-height:21px;font-size:15px;color:#1c1c1c;">16</span>
<div style="left:0px;top:645px;width:28px;height:1px;background:#b4b4b4;"></div>
<span class="t" style="left:5.66px;top:624.70px;height:21px;line-height:21px;font-size:15px;color:#1c1c1c;">17</span>
<div style="left:0px;top:665px;width:28px;height:1px;background:#b4b4b4;"></div>
<span class="t" style="left:5.66px;top:644.70px;height:21px;line-height:21px;font-size:15px;color:#1c1c1c;">18</span>
<div style="left:0px;top:685px;width:28px;height:1px;background:#b4b4b4;"></div>
<span class="t" style="left:5.66px;top:664.70px;height:21px;line-height:21px;font-size:15px;color:#1c1c1c;">19</span>
<div style="left:0px;top:705px;width:28px;height:1px;background:#b4b4b4;"></div>
<span class="t" style="left:5.66px;top:684.70px;height:21px;line-height:21px;font-size:15px;color:#1c1c1c;">20</span>
<div style="left:0px;top:725px;width:28px;height:1px;background:#b4b4b4;"></div>
<span class="t" style="left:5.66px;top:704.70px;height:21px;line-height:21px;font-size:15px;color:#1c1c1c;">21</span>
<div style="left:0px;top:745px;width:28px;height:1px;background:#b4b4b4;"></div>
<span class="t" style="left:5.66px;top:724.70px;height:21px;line-height:21px;font-size:15px;color:#1c1c1c;">22</span>
<div style="left:0px;top:765px;width:28px;height:1px;background:#b4b4b4;"></div>
<span class="t" style="left:5.66px;top:744.70px;height:21px;line-height:21px;font-size:15px;color:#1c1c1c;">23</span>
<div style="left:0px;top:785px;width:28px;height:1px;background:#b4b4b4;"></div>
<span class="t" style="left:5.66px;top:764.70px;height:21px;line-height:21px;font-size:15px;color:#1c1c1c;">24</span>
<div style="left:0px;top:805px;width:28px;height:1px;background:#b4b4b4;"></div>
<span class="t" style="left:5.66px;top:784.70px;height:21px;line-height:21px;font-size:15px;color:#1c1c1c;">25</span>
<div style="left:0px;top:825px;width:28px;height:1px;background:#b4b4b4;"></div>
<span class="t" style="left:5.66px;top:804.70px;height:21px;line-height:21px;font-size:15px;color:#1c1c1c;">26</span>
<div style="left:0px;top:845px;width:28px;height:1px;background:#b4b4b4;"></div>
<span class="t" style="left:5.66px;top:824.70px;height:21px;line-height:21px;font-size:15px;color:#1c1c1c;">27</span>
<div style="left:0px;top:865px;width:28px;height:1px;background:#b4b4b4;"></div>
<span class="t" style="left:5.66px;top:844.70px;height:21px;line-height:21px;font-size:15px;color:#1c1c1c;">28</span>
<div style="left:0px;top:885px;width:28px;height:1px;background:#b4b4b4;"></div>
<span class="t" style="left:5.66px;top:864.70px;height:21px;line-height:21px;font-size:15px;color:#1c1c1c;">29</span>
<div style="left:0px;top:905px;width:28px;height:1px;background:#b4b4b4;"></div>
<span class="t" style="left:5.66px;top:884.70px;height:21px;line-height:21px;font-size:15px;color:#1c1c1c;">30</span>
<div style="left:0px;top:925px;width:28px;height:1px;background:#b4b4b4;"></div>
<span class="t" style="left:5.66px;top:904.70px;height:21px;line-height:21px;font-size:15px;color:#1c1c1c;">31</span>
<div style="left:0px;top:945px;width:28px;height:1px;background:#b4b4b4;"></div>
<span class="t" style="left:5.66px;top:924.70px;height:21px;line-height:21px;font-size:15px;color:#1c1c1c;">32</span>
<div style="left:0px;top:965px;width:28px;height:1px;background:#b4b4b4;"></div>
<span class="t" style="left:5.66px;top:944.70px;height:21px;line-height:21px;font-size:15px;color:#1c1c1c;">33</span>
<div style="left:0px;top:985px;width:28px;height:1px;background:#b4b4b4;"></div>
<span class="t" style="left:5.66px;top:964.70px;height:21px;line-height:21px;font-size:15px;color:#1c1c1c;">34</span>
<div style="left:125px;top:248px;width:1px;height:742px;background:#d4d4d4;"></div>
<div style="left:491px;top:248px;width:1px;height:742px;background:#d4d4d4;"></div>
<div style="left:585px;top:248px;width:1px;height:742px;background:#d4d4d4;"></div>
<div style="left:690px;top:248px;width:1px;height:742px;background:#d4d4d4;"></div>
<div style="left:790px;top:248px;width:1px;height:742px;background:#d4d4d4;"></div>
<div style="left:864px;top:248px;width:1px;height:742px;background:#d4d4d4;"></div>
<div style="left:938px;top:248px;width:1px;height:742px;background:#d4d4d4;"></div>
<div style="left:1012px;top:248px;width:1px;height:742px;background:#d4d4d4;"></div>
<div style="left:1086px;top:248px;width:1px;height:742px;background:#d4d4d4;"></div>
<div style="left:1160px;top:248px;width:1px;height:742px;background:#d4d4d4;"></div>
<div style="left:1234px;top:248px;width:1px;height:742px;background:#d4d4d4;"></div>
<div style="left:1308px;top:248px;width:1px;height:742px;background:#d4d4d4;"></div>
<div style="left:1382px;top:248px;width:1px;height:742px;background:#d4d4d4;"></div>
<div style="left:1456px;top:248px;width:1px;height:742px;background:#d4d4d4;"></div>
<div style="left:1530px;top:248px;width:1px;height:742px;background:#d4d4d4;"></div>
<div style="left:1604px;top:248px;width:1px;height:742px;background:#d4d4d4;"></div>
<div style="left:1678px;top:248px;width:1px;height:742px;background:#d4d4d4;"></div>
<div style="left:1752px;top:248px;width:1px;height:742px;background:#d4d4d4;"></div>
<div style="left:1826px;top:248px;width:1px;height:742px;background:#d4d4d4;"></div>
<div style="left:1900px;top:248px;width:1px;height:742px;background:#d4d4d4;"></div>
<div style="left:29px;top:270px;width:1872px;height:1px;background:#d4d4d4;"></div>
<div style="left:29px;top:293px;width:1872px;height:1px;background:#d4d4d4;"></div>
<div style="left:29px;top:313px;width:1872px;height:1px;background:#d4d4d4;"></div>
<div style="left:29px;top:344px;width:1872px;height:1px;background:#d4d4d4;"></div>
<div style="left:29px;top:367px;width:1872px;height:1px;background:#d4d4d4;"></div>
<div style="left:29px;top:387px;width:1872px;height:1px;background:#d4d4d4;"></div>
<div style="left:29px;top:407px;width:1872px;height:1px;background:#d4d4d4;"></div>
<div style="left:29px;top:427px;width:1872px;height:1px;background:#d4d4d4;"></div>
<div style="left:29px;top:447px;width:1872px;height:1px;background:#d4d4d4;"></div>
<div style="left:29px;top:467px;width:1872px;height:1px;background:#d4d4d4;"></div>
<div style="left:29px;top:487px;width:1872px;height:1px;background:#d4d4d4;"></div>
<div style="left:29px;top:507px;width:1872px;height:1px;background:#d4d4d4;"></div>
<div style="left:29px;top:527px;width:1872px;height:1px;background:#d4d4d4;"></div>
<div style="left:29px;top:566px;width:1872px;height:1px;background:#d4d4d4;"></div>
<div style="left:29px;top:586px;width:1872px;height:1px;background:#d4d4d4;"></div>
<div style="left:29px;top:606px;width:1872px;height:1px;background:#d4d4d4;"></div>
<div style="left:29px;top:645px;width:1872px;height:1px;background:#d4d4d4;"></div>
<div style="left:29px;top:665px;width:1872px;height:1px;background:#d4d4d4;"></div>
<div style="left:29px;top:685px;width:1872px;height:1px;background:#d4d4d4;"></div>
<div style="left:29px;top:705px;width:1872px;height:1px;background:#d4d4d4;"></div>
<div style="left:29px;top:725px;width:1872px;height:1px;background:#d4d4d4;"></div>
<div style="left:29px;top:745px;width:1872px;height:1px;background:#d4d4d4;"></div>
<div style="left:29px;top:765px;width:1872px;height:1px;background:#d4d4d4;"></div>
<div style="left:29px;top:785px;width:1872px;height:1px;background:#d4d4d4;"></div>
<div style="left:29px;top:805px;width:1872px;height:1px;background:#d4d4d4;"></div>
<div style="left:29px;top:825px;width:1872px;height:1px;background:#d4d4d4;"></div>
<div style="left:29px;top:845px;width:1872px;height:1px;background:#d4d4d4;"></div>
<div style="left:29px;top:865px;width:1872px;height:1px;background:#d4d4d4;"></div>
<div style="left:29px;top:885px;width:1872px;height:1px;background:#d4d4d4;"></div>
<div style="left:29px;top:905px;width:1872px;height:1px;background:#d4d4d4;"></div>
<div style="left:29px;top:925px;width:1872px;height:1px;background:#d4d4d4;"></div>
<div style="left:29px;top:945px;width:1872px;height:1px;background:#d4d4d4;"></div>
<div style="left:29px;top:965px;width:1872px;height:1px;background:#d4d4d4;"></div>
<div style="left:29px;top:985px;width:1872px;height:1px;background:#d4d4d4;"></div>
<div style="left:1900px;top:229px;width:1px;height:762px;background:#9b9b9b;"></div>
<div style="left:29px;top:271px;width:761px;height:22px;background:#fff;"></div>
<div style="left:29px;top:314px;width:761px;height:53px;background:#ffff99;"></div>
<div style="left:29px;top:368px;width:761px;height:297px;background:#fff;"></div>
<div style="left:28px;top:313px;width:762px;height:1px;background:#000;"></div>
<div style="left:28px;top:344px;width:762px;height:1px;background:#000;"></div>
<div style="left:28px;top:367px;width:762px;height:1px;background:#000;"></div>
<div style="left:28px;top:387px;width:762px;height:1px;background:#000;"></div>
<div style="left:28px;top:407px;width:762px;height:1px;background:#000;"></div>
<div style="left:28px;top:427px;width:762px;height:1px;background:#000;"></div>
<div style="left:28px;top:447px;width:762px;height:1px;background:#000;"></div>
<div style="left:28px;top:467px;width:762px;height:1px;background:#000;"></div>
<div style="left:28px;top:487px;width:762px;height:1px;background:#000;"></div>
<div style="left:28px;top:507px;width:762px;height:1px;background:#000;"></div>
<div style="left:28px;top:527px;width:762px;height:1px;background:#000;"></div>
<div style="left:28px;top:566px;width:762px;height:1px;background:#000;"></div>
<div style="left:28px;top:586px;width:762px;height:1px;background:#000;"></div>
<div style="left:28px;top:606px;width:762px;height:1px;background:#000;"></div>
<div style="left:28px;top:645px;width:762px;height:1px;background:#000;"></div>
<div style="left:28px;top:665px;width:762px;height:1px;background:#000;"></div>
<div style="left:125px;top:313px;width:1px;height:353px;background:#000;"></div>
<div style="left:491px;top:313px;width:1px;height:353px;background:#000;"></div>
<div style="left:585px;top:313px;width:1px;height:353px;background:#000;"></div>
<div style="left:690px;top:313px;width:1px;height:353px;background:#000;"></div>
<div style="left:790px;top:248px;width:1px;height:742px;background:#9c9c9c;"></div>
<div style="left:28px;top:313px;width:1px;height:353px;background:#000;"></div>
<span class="t" style="left:236.00px;top:271.21px;height:23px;line-height:23px;font-size:16.7px;color:#000;font-weight:bold;letter-spacing:0.031px;">Ведомость выполненных объёмов работ</span>
<span class="t" style="left:34.00px;top:318.87px;height:21px;line-height:21px;font-size:14.8px;color:#000;font-weight:bold;letter-spacing:-0.080px;">Код работ</span>
<span class="t" style="left:271.00px;top:318.87px;height:21px;line-height:21px;font-size:14.8px;color:#000;font-weight:bold;letter-spacing:0.042px;">Вид работ</span>
<span class="t" style="left:513.50px;top:318.87px;height:21px;line-height:21px;font-size:14.8px;color:#000;font-weight:bold;">Кол-во</span>
<span class="t" style="left:609.00px;top:318.87px;height:21px;line-height:21px;font-size:14.8px;color:#000;font-weight:bold;letter-spacing:-0.080px;">Ед. изм.</span>
<span class="t" style="left:694.00px;top:318.87px;height:21px;line-height:21px;font-size:14.8px;color:#000;font-weight:bold;letter-spacing:0.232px;">Примечание</span>
<div style="left:108px;top:326px;width:17px;height:17px;background:linear-gradient(#fdfdfd,#e9e9e9);border:1px solid #a9a9a9;box-sizing:border-box;"></div>
<svg style="left:112.5px;top:333.0px;" width="8" height="5" viewBox="0 0 8 5"><path d="M0 0H8L4.0 4.5Z" fill="#555"/></svg>
<div style="left:474px;top:326px;width:17px;height:17px;background:linear-gradient(#fdfdfd,#e9e9e9);border:1px solid #a9a9a9;box-sizing:border-box;"></div>
<svg style="left:478.5px;top:333.0px;" width="8" height="5" viewBox="0 0 8 5"><path d="M0 0H8L4.0 4.5Z" fill="#555"/></svg>
<div style="left:568px;top:326px;width:17px;height:17px;background:linear-gradient(#fdfdfd,#e9e9e9);border:1px solid #a9a9a9;box-sizing:border-box;"></div>
<svg style="left:572.5px;top:333.0px;" width="8" height="5" viewBox="0 0 8 5"><path d="M0 0H8L4.0 4.5Z" fill="#555"/></svg>
<div style="left:673px;top:326px;width:17px;height:17px;background:linear-gradient(#fdfdfd,#e9e9e9);border:1px solid #a9a9a9;box-sizing:border-box;"></div>
<svg style="left:677.5px;top:333.0px;" width="8" height="5" viewBox="0 0 8 5"><path d="M0 0H8L4.0 4.5Z" fill="#555"/></svg>
<span class="t" style="left:72.88px;top:346.37px;height:21px;line-height:21px;font-size:14.8px;color:#000;font-weight:bold;">1</span>
<span class="t" style="left:304.88px;top:346.37px;height:21px;line-height:21px;font-size:14.8px;color:#000;font-weight:bold;">2</span>
<span class="t" style="left:534.38px;top:346.37px;height:21px;line-height:21px;font-size:14.8px;color:#000;font-weight:bold;">3</span>
<span class="t" style="left:633.88px;top:346.37px;height:21px;line-height:21px;font-size:14.8px;color:#000;font-weight:bold;">4</span>
<span class="t" style="left:736.38px;top:346.37px;height:21px;line-height:21px;font-size:14.8px;color:#000;font-weight:bold;">5</span>
<span class="t" style="left:128.30px;top:367.91px;height:21px;line-height:21px;font-size:14.7px;color:#000;letter-spacing:-0.029px;">Разработка траншеи</span>
<span class="t" style="left:72.91px;top:367.91px;height:21px;line-height:21px;font-size:14.7px;color:#000;">1</span>
<span class="t" style="left:511.93px;top:367.91px;height:21px;line-height:21px;font-size:14.7px;color:#000;">1082,56</span>
<span class="t" style="left:630.90px;top:367.91px;height:21px;line-height:21px;font-size:14.7px;color:#000;">м.</span>
<span class="t" style="left:128.30px;top:387.91px;height:21px;line-height:21px;font-size:14.7px;color:#000;letter-spacing:0.169px;">Очистка стыков</span>
<span class="t" style="left:72.91px;top:387.91px;height:21px;line-height:21px;font-size:14.7px;color:#000;">4</span>
<span class="t" style="left:530.32px;top:387.91px;height:21px;line-height:21px;font-size:14.7px;color:#000;">50</span>
<span class="t" style="left:627.51px;top:387.91px;height:21px;line-height:21px;font-size:14.7px;color:#000;">шт.</span>
<span class="t" style="left:128.30px;top:407.91px;height:21px;line-height:21px;font-size:14.7px;color:#000;letter-spacing:0.102px;">Обеспыливание стыков</span>
<span class="t" style="left:72.91px;top:407.91px;height:21px;line-height:21px;font-size:14.7px;color:#000;">5</span>
<span class="t" style="left:530.32px;top:407.91px;height:21px;line-height:21px;font-size:14.7px;color:#000;">50</span>
<span class="t" style="left:627.51px;top:407.91px;height:21px;line-height:21px;font-size:14.7px;color:#000;">шт.</span>
<span class="t" style="left:128.30px;top:427.91px;height:21px;line-height:21px;font-size:14.7px;color:#000;letter-spacing:0.032px;">Обезжиривание стыков</span>
<span class="t" style="left:72.91px;top:427.91px;height:21px;line-height:21px;font-size:14.7px;color:#000;">6</span>
<span class="t" style="left:530.32px;top:427.91px;height:21px;line-height:21px;font-size:14.7px;color:#000;">50</span>
<span class="t" style="left:627.51px;top:427.91px;height:21px;line-height:21px;font-size:14.7px;color:#000;">шт.</span>
<span class="t" style="left:128.30px;top:447.91px;height:21px;line-height:21px;font-size:14.7px;color:#000;letter-spacing:0.091px;">Изоляция стыков</span>
<span class="t" style="left:72.91px;top:447.91px;height:21px;line-height:21px;font-size:14.7px;color:#000;">7</span>
<span class="t" style="left:530.32px;top:447.91px;height:21px;line-height:21px;font-size:14.7px;color:#000;">50</span>
<span class="t" style="left:627.51px;top:447.91px;height:21px;line-height:21px;font-size:14.7px;color:#000;">шт.</span>
<span class="t" style="left:128.30px;top:467.91px;height:21px;line-height:21px;font-size:14.7px;color:#000;letter-spacing:-0.212px;">Погружение свай Ду150</span>
<span class="t" style="left:68.82px;top:467.91px;height:21px;line-height:21px;font-size:14.7px;color:#000;">12</span>
<span class="t" style="left:534.41px;top:467.91px;height:21px;line-height:21px;font-size:14.7px;color:#000;">3</span>
<span class="t" style="left:627.51px;top:467.91px;height:21px;line-height:21px;font-size:14.7px;color:#000;">шт.</span>
<span class="t" style="left:128.30px;top:487.91px;height:21px;line-height:21px;font-size:14.7px;color:#000;letter-spacing:-0.209px;">Монтаж втулок Ду150</span>
<span class="t" style="left:68.82px;top:487.91px;height:21px;line-height:21px;font-size:14.7px;color:#000;">21</span>
<span class="t" style="left:530.32px;top:487.91px;height:21px;line-height:21px;font-size:14.7px;color:#000;">98</span>
<span class="t" style="left:628.74px;top:487.91px;height:21px;line-height:21px;font-size:14.7px;color:#000;">шт</span>
<span class="t" style="left:128.30px;top:507.91px;height:21px;line-height:21px;font-size:14.7px;color:#000;letter-spacing:-0.212px;">Погружение свай Ду200</span>
<span class="t" style="left:68.82px;top:507.91px;height:21px;line-height:21px;font-size:14.7px;color:#000;">22</span>
<span class="t" style="left:534.41px;top:507.91px;height:21px;line-height:21px;font-size:14.7px;color:#000;">5</span>
<span class="t" style="left:627.51px;top:507.91px;height:21px;line-height:21px;font-size:14.7px;color:#000;">шт.</span>
<span class="t" style="left:128.30px;top:528.11px;height:21px;line-height:21px;font-size:14.7px;color:#000;letter-spacing:-0.015px;">Заполнение внутритрубного пространства свай</span>
<span class="t" style="left:128.30px;top:547.91px;height:21px;line-height:21px;font-size:14.7px;color:#000;letter-spacing:0.019px;">цементно-песчаной смесью 1:5</span>
<span class="t" style="left:68.82px;top:537.71px;height:21px;line-height:21px;font-size:14.7px;color:#000;">23</span>
<span class="t" style="left:524.19px;top:537.71px;height:21px;line-height:21px;font-size:14.7px;color:#000;">1,64</span>
<span class="t" style="left:628.86px;top:537.71px;height:21px;line-height:21px;font-size:14.7px;color:#000;">м3</span>
<span class="t" style="left:128.30px;top:566.91px;height:21px;line-height:21px;font-size:14.7px;color:#000;letter-spacing:-0.134px;">Монтаж оголовков свай</span>
<span class="t" style="left:68.82px;top:566.91px;height:21px;line-height:21px;font-size:14.7px;color:#000;">24</span>
<span class="t" style="left:534.41px;top:566.91px;height:21px;line-height:21px;font-size:14.7px;color:#000;">8</span>
<span class="t" style="left:628.74px;top:566.91px;height:21px;line-height:21px;font-size:14.7px;color:#000;">шт</span>
<span class="t" style="left:128.30px;top:586.91px;height:21px;line-height:21px;font-size:14.7px;color:#000;letter-spacing:-0.153px;">Монтаж основания перемитрального ограждения</span>
<span class="t" style="left:68.82px;top:586.91px;height:21px;line-height:21px;font-size:14.7px;color:#000;">25</span>
<span class="t" style="left:520.11px;top:586.91px;height:21px;line-height:21px;font-size:14.7px;color:#000;">25,56</span>
<span class="t" style="left:633.41px;top:586.91px;height:21px;line-height:21px;font-size:14.7px;color:#000;">т.</span>
<span class="t" style="left:128.30px;top:607.11px;height:21px;line-height:21px;font-size:14.7px;color:#000;letter-spacing:0.006px;">Очистка до 2 степени, обезжиривание,</span>
<span class="t" style="left:128.30px;top:626.91px;height:21px;line-height:21px;font-size:14.7px;color:#000;letter-spacing:-0.063px;">антикоррозионная защита металлоконструкций</span>
<span class="t" style="left:68.82px;top:616.71px;height:21px;line-height:21px;font-size:14.7px;color:#000;">26</span>
<span class="t" style="left:524.19px;top:616.71px;height:21px;line-height:21px;font-size:14.7px;color:#000;">42,6</span>
<span class="t" style="left:628.86px;top:616.71px;height:21px;line-height:21px;font-size:14.7px;color:#000;">м2</span>
<span class="t" style="left:128.30px;top:645.91px;height:21px;line-height:21px;font-size:14.7px;color:#000;letter-spacing:-0.219px;">Монтаж площадок обслуживания Пм-1</span>
<span class="t" style="left:68.82px;top:645.91px;height:21px;line-height:21px;font-size:14.7px;color:#000;">27</span>
<span class="t" style="left:534.41px;top:645.91px;height:21px;line-height:21px;font-size:14.7px;color:#000;">2</span>
<span class="t" style="left:628.74px;top:645.91px;height:21px;line-height:21px;font-size:14.7px;color:#000;">шт</span>
<span class="t" style="left:943.00px;top:248.21px;height:23px;line-height:23px;font-size:16.7px;color:#00b050;font-weight:bold;letter-spacing:-0.039px;">Таблица заполняется автоматизированно</span>
<div style="left:937px;top:246px;width:77px;height:26px;border:2px solid #217346;box-sizing:border-box;"></div>
<div style="left:1010px;top:267.5px;width:6px;height:6px;background:#217346;border:1px solid #fff;box-sizing:border-box;"></div>
<div style="left:800px;top:252px;width:137px;height:63px;box-sizing:border-box;border-radius:9px;border:1px solid #7668a4;background:linear-gradient(180deg,#4fb2d0 0,#5fc9e4 4%,#7be1f7 9%,#6fd6ee 13%,#4eb4d4 21%,#4db3d3 86%,#419fbd 94%,#3a93b0 100%);box-shadow:0 3px 4px rgba(0,0,0,.38), inset -4px 0 3px rgba(30,95,125,.55), inset 0 -3px 3px rgba(30,95,125,.35), inset 2px 0 2px rgba(120,215,240,.35);"></div>
<span class="t" style="left:817.00px;top:265.20px;height:18px;line-height:18px;font-size:13px;color:#000;font-weight:bold;letter-spacing:0.414px;">Сформировать</span>
<span class="t" style="left:832.00px;top:285.70px;height:18px;line-height:18px;font-size:13px;color:#000;font-weight:bold;letter-spacing:0.458px;">ведомость</span>
<span class="t" style="left:1620px;top:926px;height:60px;line-height:60px;font-size:52px;letter-spacing:0.3px;font-family:'Liberation Serif',serif;color:#c31a1a;-webkit-text-stroke:1.4px #c31a1a;transform:scaleX(1.135);transform-origin:0 50%;text-shadow:-4px 3px 4px rgba(0,0,0,.55);">ProVersion</span>
<div style="left:1901px;top:229px;width:19px;height:762px;background:#e6e6e6;"></div>
<div style="left:1904px;top:230px;width:13px;height:13px;background:#fff;border:1px solid #cfcfcf;box-sizing:border-box;"></div>
<svg style="left:1907px;top:234px;" width="7" height="5" viewBox="0 0 7 5"><path d="M0 4.500H7L3.5 0.5Z" fill="#777"/></svg>
<div style="left:1904px;top:243px;width:13px;height:714px;background:#fff;border:1px solid #c4c4c4;box-sizing:border-box;"></div>
<div style="left:1904px;top:979px;width:13px;height:13px;background:#fff;border:1px solid #cfcfcf;box-sizing:border-box;"></div>
<svg style="left:1907px;top:983px;" width="7" height="5" viewBox="0 0 7 5"><path d="M0 0.5H7L3.5 4.500Z" fill="#777"/></svg>
<svg style="left:570px;top:960px;" width="86" height="82" viewBox="0 0 86 82"><ellipse cx="42.5" cy="41" rx="37.400" ry="35" fill="none" stroke="#d24f45" stroke-width="5.700"/></svg>
</body></html>
